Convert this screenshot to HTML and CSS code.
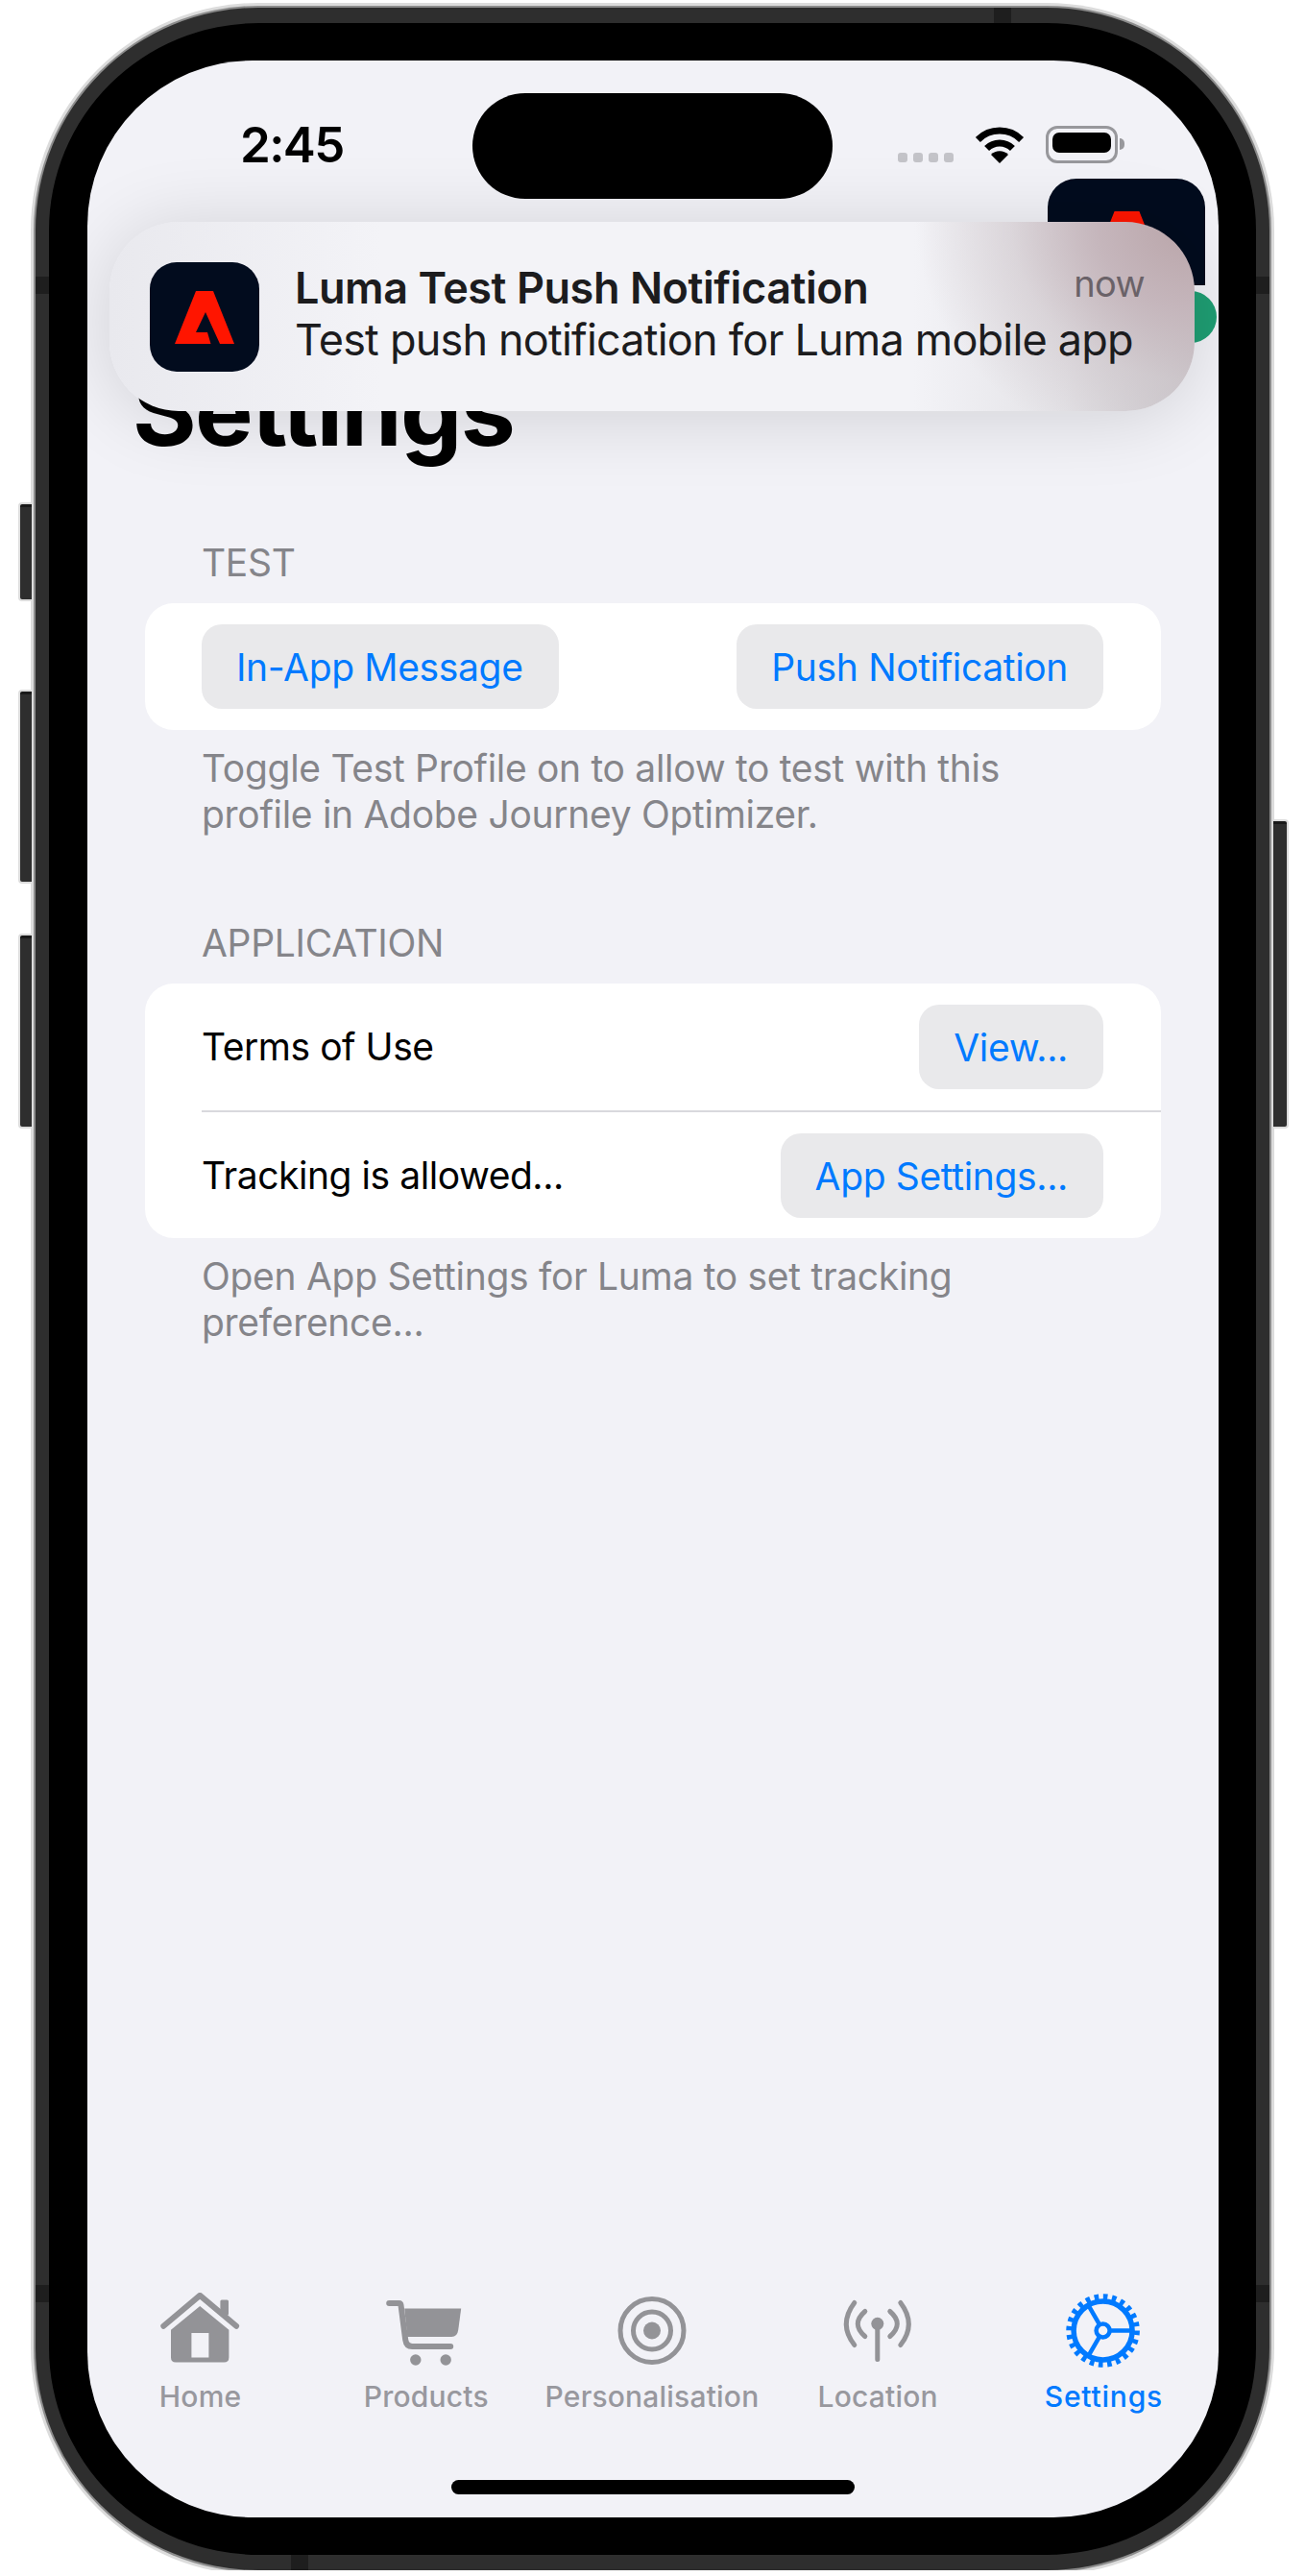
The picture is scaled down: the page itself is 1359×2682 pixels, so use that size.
FILE: index.html
```html
<!DOCTYPE html>
<html lang="en">
<head>
    <meta charset="UTF-8">
    <meta name="viewport" content="width=device-width, initial-scale=1.0">
    <title>Luma Settings</title>
    <link rel="stylesheet" href="styles.css">
</head>
<body>
    <div class="phone">
        <span class="side-btn mute"></span>
        <span class="side-btn vol-up"></span>
        <span class="side-btn vol-down"></span>
        <span class="side-btn power"></span>
        <span class="band band-top"></span>
        <span class="band band-bottom"></span>
        <span class="band band-left-a"></span>
        <span class="band band-right-a"></span>
        <span class="band band-left-b"></span>
        <span class="band band-right-b"></span>

        <div class="screen">
            <div class="status">
                <span class="time">2:45</span>
                <div class="status-icons">
                    <div class="signal"><i></i><i></i><i></i><i></i></div>
                    <svg class="wifi" viewBox="0 0 52 38">
                        <path d="M3.4 13.4A32 32 0 0 1 48.6 13.4M12.6 22.6A19 19 0 0 1 39.4 22.6" fill="none" stroke="#000" stroke-width="7"/>
                        <path d="M26 38L17 29A12.7 12.7 0 0 1 35 29Z" fill="#000"/>
                    </svg>
                    <div class="battery"><div class="battery-fill"></div></div>
                </div>
            </div>

            <h1 class="big-title">Settings</h1>

            <section class="group">
                <h2 class="group-head">TEST</h2>
                <div class="card">
                    <div class="row row-split">
                        <button class="btn">In-App Message</button>
                        <button class="btn">Push Notification</button>
                    </div>
                </div>
                <p class="group-foot">Toggle Test Profile on to allow to test with this<br>profile in Adobe Journey Optimizer.</p>
            </section>

            <section class="group group-second">
                <h2 class="group-head">APPLICATION</h2>
                <div class="card">
                    <div class="row row-split row-line">
                        <span class="row-label">Terms of Use</span>
                        <button class="btn">View...</button>
                    </div>
                    <div class="row row-split row-last">
                        <span class="row-label">Tracking is allowed...</span>
                        <button class="btn">App Settings...</button>
                    </div>
                </div>
                <p class="group-foot">Open App Settings for Luma to set tracking<br>preference...</p>
            </section>

            <nav class="tabs">
                <div class="tab">
                    <svg class="tab-icon" viewBox="0 0 90 80">
                        <g transform="translate(3.4 0)" fill="#939397">
                            <path d="M40.8 14L71 38.7V67.4Q71 72.4 66 72.4H15.6Q10.6 72.4 10.6 67.4V38.7ZM32 42V67.4H50V42Z" fill-rule="evenodd"/>
                            <path d="M2.9 34.7L40.8 2.9L78.7 34.7" fill="none" stroke="#939397" stroke-width="6" stroke-linecap="round" stroke-linejoin="round"/>
                            <rect x="62" y="7.4" width="8.6" height="16" rx="1.5"/>
                        </g>
                    </svg>
                    <span class="tab-label">Home</span>
                </div>
                <div class="tab">
                    <svg class="tab-icon" viewBox="0 0 90 80">
                        <g transform="translate(3.2 8)" fill="#939397">
                            <path d="M3 3H13.5Q15 3 15.3 5L20 41Q21 48 27 48H67" fill="none" stroke="#939397" stroke-width="6" stroke-linecap="round"/>
                            <path d="M19 8.4H78L75 31Q74 38 68 38H22Z"/>
                            <circle cx="30.6" cy="62" r="5.7"/>
                            <circle cx="62" cy="62" r="5.7"/>
                        </g>
                    </svg>
                    <span class="tab-label">Products</span>
                </div>
                <div class="tab">
                    <svg class="tab-icon" viewBox="0 0 90 80">
                        <g fill="none" stroke="#939397" stroke-width="5">
                            <circle cx="45" cy="39.5" r="33"/>
                            <circle cx="45" cy="39.5" r="19.5"/>
                        </g>
                        <circle cx="45" cy="39.5" r="9" fill="#939397"/>
                    </svg>
                    <span class="tab-label">Personalisation</span>
                </div>
                <div class="tab">
                    <svg class="tab-icon" viewBox="0 0 90 80">
                        <g transform="translate(8.8 8.5)">
                            <path d="M23 11Q8 24 23 37M49 11Q64 24 49 37M12 2Q-5 24.5 12 46M60 2Q77 24.5 60 46M36 24V61" fill="none" stroke="#939397" stroke-width="5" stroke-linecap="round"/>
                            <circle cx="36" cy="23.8" r="6.5" fill="#939397"/>
                        </g>
                    </svg>
                    <span class="tab-label">Location</span>
                </div>
                <div class="tab tab-active">
                    <svg class="tab-icon" viewBox="0 0 90 80">
                        <g fill="none" stroke="#007aff">
                            <circle cx="44.6" cy="39.5" r="30.5" stroke-width="5.5"/>
                            <circle cx="44.6" cy="39.5" r="35.3" stroke-width="6" stroke-dasharray="4.6 4.64"/>
                            <circle cx="44.6" cy="39.5" r="7" stroke-width="4.5"/>
                            <path d="M51.6 39.5H75M41.1 33.4L29.4 13.1M41.1 45.6L29.4 65.9" stroke-width="4.5"/>
                        </g>
                    </svg>
                    <span class="tab-label">Settings</span>
                </div>
            </nav>
            <div class="home-bar"></div>

            <div class="peek-icon">
                <svg class="peek-logo" viewBox="0 0 62 55"><path d="M22 0H40L62 55H47L32 22L22 43H34L37.5 55H0Z" fill="#ff1500"/></svg>
            </div>
            <span class="peek-badge"></span>
            <div class="island"></div>

            <div class="notif">
                <div class="notif-icon">
                    <svg class="notif-logo" viewBox="0 0 62 55"><path d="M22 0H40L62 55H47L32 22L22 43H34L37.5 55H0Z" fill="#ff1500"/></svg>
                </div>
                <div class="notif-text">
                    <div class="notif-top">
                        <span class="notif-title">Luma Test Push Notification</span>
                        <span class="notif-time">now</span>
                    </div>
                    <div class="notif-body">Test push notification for Luma mobile app</div>
                </div>
            </div>
        </div>
    </div>
</body>
</html>
```

FILE: styles.css
```css
* {
    box-sizing: border-box;
}
body {
    margin: 0;
    padding: 8px 0 0 37px;
    background-color: white;
    font-family: Inter, "Noto Sans", sans-serif;
}
.phone {
    position: relative;
    width: 1285px;
    height: 2668px;
    padding: 39px 39px 39px 40px;
    background-color: black;
    border-style: solid;
    border-color: #2e2e2e;
    border-width: 16px 14px;
    border-radius: 232px;
    box-shadow: 0 0 0 2px #8c8c8c, 0 0 0 5px #dcdcdc;
}
.side-btn {
    position: absolute;
    width: 12px;
    background-color: #2e2e2e;
    border-top: 3px solid #191919;
    border-radius: 2px 0 0 2px;
    box-shadow: 0 0 0 2px #dcdcdc;
}
.mute {
    left: -30px;
    top: 501px;
    height: 99px;
}
.vol-up {
    left: -30px;
    top: 696px;
    height: 198px;
}
.vol-down {
    left: -30px;
    top: 950px;
    height: 199px;
}
.power {
    right: -32px;
    top: 831px;
    height: 318px;
    width: 14px;
    border-radius: 0 2px 2px 0;
}
.band {
    position: absolute;
    background-color: #1e1e1e;
}
.band-top {
    left: 984px;
    top: -16px;
    width: 18px;
    height: 16px;
}
.band-bottom {
    left: 252px;
    bottom: -16px;
    width: 18px;
    height: 16px;
}
.band-left-a, .band-left-b {
    left: -14px;
    width: 14px;
    height: 18px;
}
.band-right-a, .band-right-b {
    right: -14px;
    width: 14px;
    height: 18px;
}
.band-left-a, .band-right-a {
    top: 264px;
}
.band-left-b, .band-right-b {
    top: 2355px;
}

/* screen */
.screen {
    position: relative;
    display: flex;
    flex-direction: column;
    width: 1178px;
    height: 2558px;
    background-color: #f2f2f7;
    border-radius: 172px;
    overflow: hidden;
}
.status {
    display: flex;
    justify-content: space-between;
    align-items: flex-start;
    height: 107px;
    padding: 68px 105px 0 159px;
}
.time {
    font-size: 51px;
    font-weight: 600;
    line-height: 39px;
    letter-spacing: -1.6px;
    color: black;
}
.status-icons {
    display: flex;
    align-items: flex-start;
    gap: 22px;
}
.signal {
    display: flex;
    gap: 6px;
    margin-top: 28px;
}
.signal i {
    width: 10px;
    height: 10px;
    border-radius: 3px;
    background-color: #c3c3c8;
}
.wifi {
    width: 52px;
    height: 38px;
    margin-top: 1px;
}
.battery {
    position: relative;
    width: 75px;
    height: 39px;
    padding: 6px;
    border: 3.5px solid #98989c;
    border-radius: 12px;
}
.battery::after {
    content: "";
    position: absolute;
    right: -10px;
    top: 10px;
    width: 5px;
    height: 12px;
    background-color: #98989c;
    border-radius: 0 5px 5px 0;
}
.battery-fill {
    height: 100%;
    margin: -2px;
    background-color: black;
    border-radius: 7px;
}
.big-title {
    margin: 196px 0 0 47px;
    font-size: 102px;
    font-weight: 700;
    line-height: 122px;
    letter-spacing: -1.8px;
    color: black;
}

/* groups */
.group {
    margin: 0 60px;
}
.big-title + .group {
    margin-top: 74px;
}
.group-second {
    margin-top: 86px;
}
.group-head {
    margin: 0 0 18px 59px;
    font-size: 39px;
    font-weight: 400;
    line-height: 48px;
    letter-spacing: -0.3px;
    color: #85858a;
}
.card {
    background-color: white;
    border-radius: 30px;
}
.row {
    margin-left: 59px;
    padding: 22px 60px 22px 0;
}
.row-split {
    display: flex;
    justify-content: space-between;
    align-items: center;
}
.row-line {
    border-bottom: 2px solid #d9d9dd;
}
.row-last {
    padding-bottom: 21px;
}
.row-label {
    font-size: 39px;
    line-height: 48px;
    letter-spacing: -0.45px;
    color: black;
}
.btn {
    height: 88px;
    padding: 0 37px 0 36px;
    font-family: inherit;
    font-size: 39px;
    letter-spacing: -0.35px;
    color: #007aff;
    background-color: #e9e9eb;
    border: none;
    border-radius: 21px;
}
.group-foot {
    margin: 16px 0 0 59px;
    font-size: 39px;
    line-height: 48px;
    letter-spacing: -0.3px;
    color: #85858a;
}

/* tab bar */
.tabs {
    display: grid;
    grid-template-columns: repeat(5, 1fr);
    margin-top: auto;
    padding-right: 2px;
}
.tab {
    display: flex;
    flex-direction: column;
    align-items: center;
}
.tab-icon {
    width: 90px;
    height: 80px;
}
.tab-label {
    margin-top: 10px;
    font-size: 30px;
    font-weight: 500;
    line-height: 36px;
    letter-spacing: 0.2px;
    color: #98989e;
}
.tab-active .tab-label {
    letter-spacing: 0.8px;
    color: #007aff;
}
.home-bar {
    flex: none;
    width: 420px;
    height: 15px;
    margin: 69px auto 24px;
    background-color: black;
    border-radius: 8px;
}

/* things on top of the page */
.island {
    position: absolute;
    left: 401px;
    top: 34px;
    width: 375px;
    height: 110px;
    background-color: black;
    border-radius: 55px;
}
.peek-icon {
    position: absolute;
    left: 1000px;
    top: 123px;
    width: 164px;
    height: 111px;
    padding-top: 34px;
    background-color: #020c1e;
    border-radius: 30px 30px 0 0;
}
.peek-logo {
    display: block;
    width: 89px;
    height: 79px;
    margin: 0 auto;
}
.peek-badge {
    position: absolute;
    left: 1122px;
    top: 240px;
    width: 54px;
    height: 54px;
    background-color: #1f9e73;
    border-radius: 50%;
}
.notif {
    position: absolute;
    left: 23px;
    top: 168px;
    display: flex;
    gap: 38px;
    width: 1130px;
    height: 197px;
    padding: 42px 52px 0 42px;
    background:
        radial-gradient(ellipse 290px 250px at 100% 0, #b9a4a8 0, rgba(196, 180, 186, 0.95) 35%, rgba(205, 195, 200, 0.5) 66%, rgba(225, 220, 224, 0) 100%),
        linear-gradient(90deg, rgba(200, 197, 201, 0) 74%, rgba(200, 197, 201, 0.35) 88%, rgba(200, 197, 201, 1) 100%),
        linear-gradient(90deg, #e9e9ee, #f3f3f7 25%);
    border-radius: 72px;
    box-shadow: 0 6px 80px rgba(0, 0, 0, 0.14);
}
.notif-icon {
    flex: none;
    display: flex;
    justify-content: center;
    align-items: center;
    width: 114px;
    height: 114px;
    background-color: #020c1e;
    border-radius: 28px;
}
.notif-logo {
    width: 62px;
    height: 55px;
}
.notif-text {
    flex: 1;
    white-space: nowrap;
}
.notif-top {
    display: flex;
    justify-content: space-between;
    align-items: flex-start;
}
.notif-title {
    margin-left: -1px;
    font-size: 45px;
    font-weight: 600;
    line-height: 54px;
    letter-spacing: -0.45px;
    color: #1c1c1e;
}
.notif-time {
    margin-top: 1px;
    font-size: 38px;
    line-height: 42px;
    letter-spacing: -0.6px;
    color: #6a6268;
}
.notif-body {
    margin-left: -1px;
    font-size: 45px;
    line-height: 54px;
    letter-spacing: -0.8px;
    color: #1c1c1e;
}
```
